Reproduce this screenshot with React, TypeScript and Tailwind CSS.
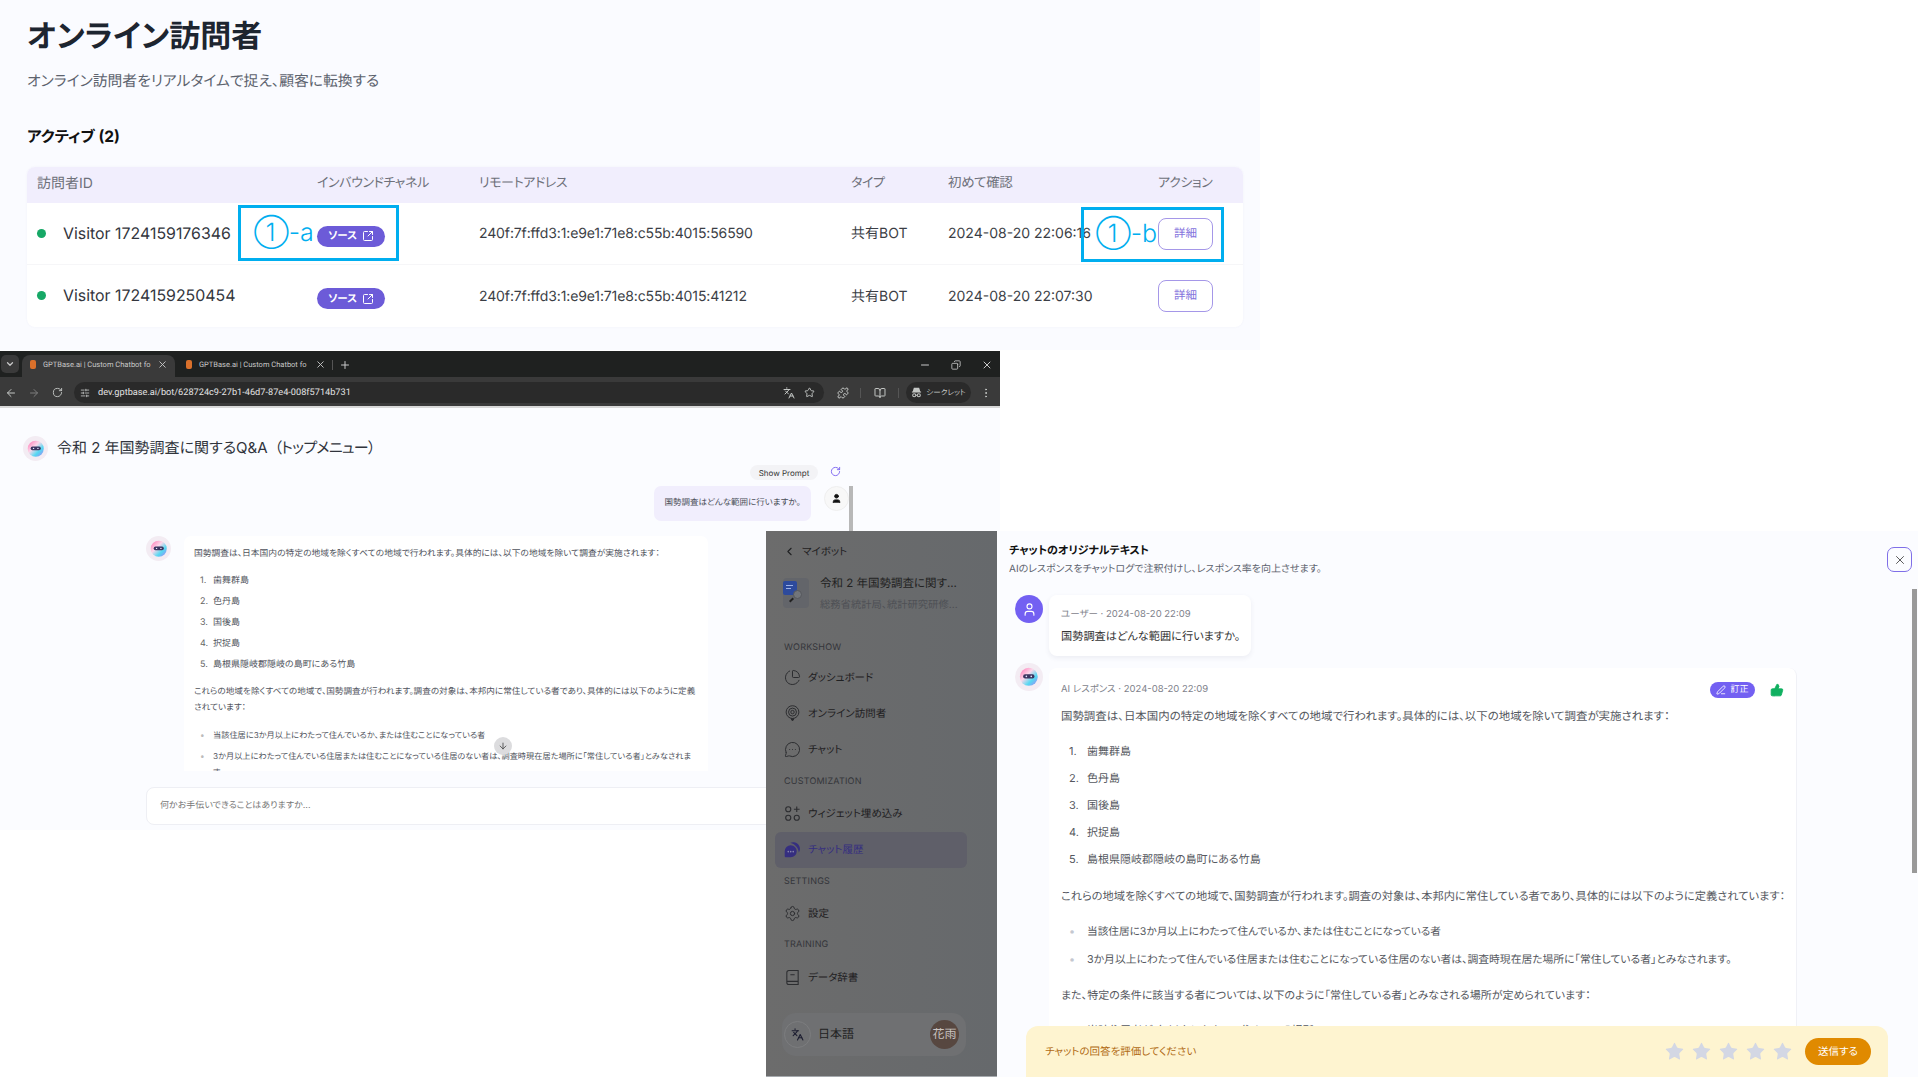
import React from 'react';
import {
  ArrowLeft,
  ArrowRight,
  BookOpen,
  ChartPie,
  ChevronDown,
  ChevronLeft,
  Copy,
  EllipsisVertical,
  Languages,
  MessageCircleMore,
  Minus,
  PenLine,
  Plus,
  Puzzle,
  RotateCw,
  Settings,
  SlidersHorizontal,
  SquareArrowOutUpRight,
  Star,
  ThumbsUp,
  User,
  X,
} from 'lucide-react';

const visitors = [
  { id: 'Visitor 1724159176346', addr: '240f:7f:ffd3:1:e9e1:71e8:c55b:4015:56590', seen: '2024-08-20 22:06:16' },
  { id: 'Visitor 1724159250454', addr: '240f:7f:ffd3:1:e9e1:71e8:c55b:4015:41212', seen: '2024-08-20 22:07:30' },
];

const islands = ['歯舞群島', '色丹島', '国後島', '択捉島', '島根県隠岐郡隠岐の島町にある竹島'];

const firstLine = '国勢調査は、日本国内の特定の地域を除くすべての地域で行われます。具体的には、以下の地域を除いて調査が実施されます：';
const bulletA = '当該住居に3か月以上にわたって住んでいるか、または住むことになっている者';

function BotAvatar({ className }: { className: string }) {
  return (
    <div className={`${className} shrink-0 rounded-full bg-[#f3ecf3] flex items-center justify-center`}>
      <svg viewBox="0 0 24 24" className="w-[70%] h-[70%]">
        <defs>
          <linearGradient id="botface" x1="0" y1="0" x2="1" y2="1">
            <stop offset="0" stopColor="#ff6fb0" />
            <stop offset="0.4" stopColor="#fcd7ea" />
            <stop offset="0.68" stopColor="#55d9f2" />
            <stop offset="1" stopColor="#a77bf5" />
          </linearGradient>
        </defs>
        <circle cx="12" cy="12" r="11" fill="url(#botface)" />
        <rect x="5" y="9" width="14" height="5" rx="2.5" fill="#3b3560" />
        <circle cx="9" cy="11.5" r="1" fill="#e8e6ff" />
        <circle cx="15" cy="11.5" r="1" fill="#e8e6ff" />
      </svg>
    </div>
  );
}

function TabFavicon() {
  return <div className="w-[6px] h-[9px] rounded-[2px] bg-[#d9702b] shrink-0" />;
}

function IncognitoIcon() {
  return (
    <svg viewBox="0 0 24 24" className="w-[11px] h-[11px]" fill="none" stroke="currentColor" strokeWidth="2.2">
      <path d="M7 3h10l2 7H5z" fill="currentColor" />
      <path d="M2 11h20" />
      <circle cx="7" cy="18" r="3.4" />
      <circle cx="17" cy="18" r="3.4" />
      <path d="M10.400 18h3.200" />
    </svg>
  );
}

function OnlineIcon() {
  return (
    <svg viewBox="0 0 24 24" className="w-[17px] h-[17px]" fill="none" stroke="#2c2d30" strokeWidth="1.4">
      <circle cx="12" cy="10" r="9" />
      <circle cx="12" cy="10" r="5.6" />
      <circle cx="12" cy="10" r="2.4" />
      <path d="M10 19.5h4l-2 3z" fill="#2c2d30" />
    </svg>
  );
}

function WidgetIcon() {
  return (
    <svg viewBox="0 0 24 24" className="w-[17px] h-[17px]" fill="none" stroke="#2c2d30" strokeWidth="1.6">
      <circle cx="6" cy="6" r="3.6" />
      <circle cx="6" cy="18" r="3.6" />
      <circle cx="18" cy="18" r="3.6" />
      <path d="M18 2v8M14 6h8" />
    </svg>
  );
}

function ChatHistoryIcon() {
  return (
    <svg viewBox="0 0 24 24" className="w-[17px] h-[17px]" fill="#352e80">
      <path d="M9 2.5a9.5 9.5 0 0 1 13.5 8.6c0 2-.6 3.6-1.6 5 -.2-5.6-4.6-11.4-11.9-13.6z" />
      <path d="M9.5 6a8.5 8.5 0 0 1 8.5 8.5A8.5 8.5 0 0 1 9.5 23H2.5A1.5 1.5 0 0 1 1 21.500V14.500A8.500 8.500 0 0 1 9.500 6z" />
      <circle cx="6" cy="15" r="1.1" fill="#8d8bb0" />
      <circle cx="9.500" cy="15" r="1.1" fill="#8d8bb0" />
      <circle cx="13" cy="15" r="1.1" fill="#8d8bb0" />
    </svg>
  );
}

function DictIcon() {
  return (
    <svg viewBox="0 0 24 24" className="w-[17px] h-[17px]" fill="none" stroke="#2c2d30" strokeWidth="1.5">
      <path d="M4 19V5a3 3 0 0 1 3-3h13v20H7a3 3 0 0 1-3-3zM4 17.500h16M9 8h6" />
    </svg>
  );
}

function BotDocIcon() {
  return (
    <div className="relative w-[26px] h-[30px] shrink-0 rounded-[4px] bg-[#63656a]">
      <div className="absolute left-0 top-[3px] w-[14px] h-[14px] rounded-[2px] bg-[#2d4a9c] flex flex-col gap-[2px] pt-[4px] pl-[3px]">
        <div className="w-[7px] h-px bg-[#9fb3e6]" />
        <div className="w-[5px] h-px bg-[#9fb3e6]" />
      </div>
      <div className="absolute left-[10px] top-[12px] w-[9px] h-[9px] rounded-full border border-[#55575c] bg-[#72757a]" />
      <div className="absolute left-[6px] top-[21px] w-[5px] h-[2px] rotate-[-45deg] bg-[#222]" />
    </div>
  );
}

function NavItem({ icon, label, active }: { icon: React.ReactNode; label: string; active?: boolean }) {
  return (
    <div
      className={`flex items-center h-[36px] pl-[9px] gap-[7px] rounded-[6px] text-[10.5px] ${
        active ? 'bg-[#5f5f69] text-[#352e80]' : 'text-[#1f2022]'
      }`}
    >
      <div className="w-[17px] flex justify-center">{icon}</div>
      <span>{label}</span>
    </div>
  );
}

function NavHeading({ children }: { children: React.ReactNode }) {
  return <div className="pl-[9px] h-[16px] leading-[16px] text-[9px] text-[#34353a] tracking-[0.2px]">{children}</div>;
}

function VisitorsPanel() {
  return (
    <section className="absolute left-0 top-0 w-[1260px] h-[350px] bg-[#fafbff] pl-[27px] pr-[17px]">
      <h1 className="pt-[16px] h-[62px] text-[31px] leading-[42px] font-bold text-[#1d2530]">オンライン訪問者</h1>
      <p className="mt-[7px] text-[14.8px] leading-[24px] text-[#5d636e]">オンライン訪問者をリアルタイムで捉え、顧客に転換する</p>
      <h2 className="mt-[32px] text-[15.5px] leading-[24px] font-bold text-[#111]">アクティブ&nbsp;(2)</h2>
      <div className="mt-[18px] rounded-[8px] bg-white overflow-hidden shadow-[0_0_2px_rgba(120,120,180,0.08)]">
        <div className="grid grid-cols-[280px_162px_372px_97px_210px_1fr] pl-[10px] h-[36px] pb-[3px] items-center bg-[#f1eefd] text-[13px] tracking-[-0.4px] text-[#6e717a]">
          <div className="text-[14px] tracking-normal">訪問者ID</div>
          <div>インバウンドチャネル</div>
          <div>リモートアドレス</div>
          <div>タイプ</div>
          <div className="text-[13.5px]">初めて確認</div>
          <div>アクション</div>
        </div>
        {visitors.map((v, i) => (
          <div
            key={v.id}
            className={`grid grid-cols-[280px_162px_372px_97px_210px_1fr] pl-[10px] h-[62px] items-center ${
              i === 0 ? 'border-b border-[#f6f6f8]' : ''
            }`}
          >
            <div className="flex items-center gap-[17px] text-[15.9px] text-[#33363d]">
              <span className="w-[9px] h-[9px] rounded-full bg-[#16a866]" />
              <span>{v.id}</span>
            </div>
            <div className="pt-[5px]">
              <div className="w-[68px] h-[21px] rounded-full bg-[#6c5bd8] flex items-center justify-center gap-[5px] text-white text-[10.5px] font-bold">
                <span>ソース</span>
                <SquareArrowOutUpRight size={12} strokeWidth={2} />
              </div>
            </div>
            <div className="text-[14px] text-[#3b3e45] tracking-[-0.12px]">{v.addr}</div>
            <div className="text-[14px] text-[#3b3e45]">共有BOT</div>
            <div className="text-[14px] text-[#3b3e45]">{v.seen}</div>
            <div>
              <div className="w-[55px] h-[32px] rounded-[8px] border border-[#a597e8] bg-white flex items-center justify-center text-[11.5px] text-[#8573dd]">
                詳細
              </div>
            </div>
          </div>
        ))}
      </div>
      <div className="absolute left-[238px] top-[205px] w-[161px] h-[56px] border-[3px] border-[#00aeef] flex items-center pl-[13px] text-[25px] font-light text-[#00aeef] leading-none">
        ①-a
      </div>
      <div className="absolute left-[1081px] top-[207px] w-[143px] h-[55px] border-[3px] border-[#00aeef] flex items-center pl-[12px] text-[25px] font-light text-[#00aeef] leading-none">
        ①-b
      </div>
    </section>
  );
}

function BrowserWindow() {
  return (
    <section className="absolute left-0 top-[351px] w-[1000px] h-[479px] bg-[#fbfcff] flex flex-col">
      <div className="h-[26px] bg-[#1f2120] flex items-end pl-[1px] text-[#c8c8c8] font-['Roboto',sans-serif] text-[7.5px]">
        <div className="w-[18px] h-[18px] mb-[4px] rounded-[5px] bg-[#3a3a3a] flex items-center justify-center">
          <ChevronDown size={10} strokeWidth={3} />
        </div>
        <div className="ml-[3px] w-[153px] h-[22px] rounded-t-[8px] bg-[#3a3a3a] flex items-center pl-[8px] pr-[7px] pb-[3px]">
          <TabFavicon />
          <span className="ml-[7px] w-[110px] whitespace-nowrap">GPTBase.ai | Custom Chatbot fo</span>
          <X size={11} className="ml-auto" />
        </div>
        <div className="w-[180px] h-[22px] flex items-center pl-[11px] pb-[3px]">
          <TabFavicon />
          <span className="ml-[7px] w-[110px] whitespace-nowrap">GPTBase.ai | Custom Chatbot fo</span>
          <X size={11} className="ml-[6px]" />
          <div className="ml-[6px] h-[10px] w-px bg-[#555]" />
          <Plus size={12} className="ml-[6px]" />
        </div>
        <div className="ml-auto h-[22px] flex items-center gap-[20px] pr-[7px] pb-[3px]">
          <Minus size={12} />
          <Copy size={10} className="rotate-90" />
          <X size={12} />
        </div>
      </div>
      <div className="h-[31px] pt-[2px] bg-[#3a3a3a] border-b-2 border-[#d8d8d8] flex items-center pl-[5px] pr-[8px] text-[#c4c7c5]">
        <ArrowLeft size={12} />
        <ArrowRight size={12} className="ml-[11px] text-[#7c7c7c]" />
        <RotateCw size={11} className="ml-[12px]" />
        <div className="ml-[11px] w-[751px] h-[21px] rounded-full bg-[#2a2a2a] flex items-center pl-[6px] pr-[9px]">
          <SlidersHorizontal size={10} />
          <span className="ml-[8px] font-['Roboto',sans-serif] text-[9.2px] text-[#e3e3e3]">dev.gptbase.ai/bot/628724c9-27b1-46d7-87e4-008f5714b731</span>
          <Languages size={12} className="ml-auto" />
          <Star size={11} className="ml-[9px]" />
        </div>
        <Puzzle size={12} className="ml-[13px]" />
        <div className="ml-[11px] h-[10px] w-px bg-[#555]" />
        <BookOpen size={12} className="ml-[13px]" />
        <div className="ml-[12px] h-[10px] w-px bg-[#555]" />
        <div className="ml-[7px] w-[65px] h-[21px] rounded-full bg-[#2a2a2a] flex items-center justify-center gap-[4px] text-[7.5px]">
          <IncognitoIcon />
          <span>シークレット</span>
        </div>
        <EllipsisVertical size={12} className="ml-[9px]" />
      </div>
      <div className="relative flex-1 pl-[23px]">
        <div className="pt-[28px] flex items-center gap-[9px] text-[15px] text-[#30343c]">
          <BotAvatar className="w-[25px] h-[25px]" />
          <span>令和 2 年国勢調査に関するQ&amp;A</span>
          <span className="-ml-[2px] tracking-[-0.7px]">（トップメニュー）</span>
        </div>
        <div className="absolute left-[750px] top-[57px] w-[68px] h-[15px] rounded-full bg-[#f3f3f6] flex items-center justify-center text-[8px] text-[#333]">
          Show Prompt
        </div>
        <RotateCw size={11} className="absolute left-[830px] top-[58px] text-[#7a63f0]" />
        <div className="absolute left-[654px] top-[78px] w-[157px] h-[35px] rounded-[7px] bg-[#f1eefd] flex items-center justify-center text-[8.5px] text-[#4b4e58]">
          国勢調査はどんな範囲に行いますか。
        </div>
        <div className="absolute left-[824px] top-[78px] w-[25px] h-[25px] rounded-full bg-[#f8f8f8] border border-[#efefef] flex items-center justify-center">
          <User size={11} fill="#111" className="text-[#111]" />
        </div>
        <div className="absolute left-[849px] top-[78px] w-[4px] h-[45px] bg-[#b8b8b8]" />
        <div className="absolute left-[146px] top-[128px] flex gap-[13px]">
          <BotAvatar className="w-[25px] h-[25px]" />
          <div className="w-[524px] h-[235px] overflow-hidden rounded-t-[7px] bg-white pl-[10px] pr-[4px] pt-[10px] text-[9px] leading-[16px] text-[#4f535c]">
            <p className="whitespace-nowrap text-[8.75px]">{firstLine}</p>
            <ol className="mt-[9px] pl-[6px]">
              {islands.map((name, i) => (
                <li key={name} className="flex h-[20.800px] items-center">
                  <span className="w-[13px] text-[#666]">{i + 1}.</span>
                  <span>{name}</span>
                </li>
              ))}
            </ol>
            <p className="mt-[9px] whitespace-nowrap text-[8.6px]">
              これらの地域を除くすべての地域で、国勢調査が行われます。調査の対象は、本邦内に常住している者であり、具体的には以下のように定義
              <br />
              されています：
            </p>
            <ul className="mt-[9px] pl-[6px] text-[8.2px]">
              <li className="flex h-[21px] items-center">
                <span className="w-[13px] text-[#bbb]">•</span>
                <span>{bulletA}</span>
              </li>
              <li className="flex items-start pt-[2px]">
                <span className="w-[13px] shrink-0 text-[#bbb]">•</span>
                <span className="whitespace-nowrap">
                  3か月以上にわたって住んでいる住居または住むことになっている住居のない者は、調査時現在居た場所に「常住している者」とみなされま
                  <br />
                  す。
                </span>
              </li>
            </ul>
          </div>
        </div>
        <div className="absolute left-[494px] top-[329px] w-[18px] h-[18px] rounded-full bg-[#dcdcde] flex items-center justify-center">
          <ArrowLeft size={10} className="-rotate-90 text-[#444]" />
        </div>
        <div className="absolute left-[146px] top-[379px] w-[640px] h-[38px] rounded-[8px] bg-white border border-[#eeeff4] flex items-center pl-[13px] text-[9px] text-[#777]">
          何かお手伝いできることはありますか...
        </div>
      </div>
    </section>
  );
}

function Sidebar() {
  return (
    <aside className="absolute left-[766px] top-[531px] w-[231px] h-[546px] bg-gradient-to-r from-[#6c6c6c] to-[#66696c] border-b border-[#a6aaae] flex flex-col pl-[9px] pr-[30px]">
      <div className="pt-[13px] pl-[8px] flex items-center gap-[6px] text-[10.5px] text-[#1f2022]">
        <ChevronLeft size={13} />
        <span>マイボット</span>
      </div>
      <div className="mt-[13px] pl-[8px] flex items-center gap-[11px]">
        <BotDocIcon />
        <div className="min-w-0">
          <div className="text-[11.5px] leading-[20px] text-[#222] whitespace-nowrap">令和 2 年国勢調査に関す...</div>
          <div className="mt-[3px] text-[10.3px] leading-[18px] text-[#4e5055] whitespace-nowrap">総務省統計局、統計研究研修...</div>
        </div>
      </div>
      <div className="mt-[26px]">
        <NavHeading>WORKSHOW</NavHeading>
      </div>
      <div className="mt-[4px]">
        <NavItem icon={<ChartPie size={17} strokeWidth={1.4} color="#2c2d30" />} label="ダッシュボード" />
        <NavItem icon={<OnlineIcon />} label="オンライン訪問者" />
        <NavItem icon={<MessageCircleMore size={17} strokeWidth={1.4} color="#2c2d30" />} label="チャット" />
      </div>
      <div className="mt-[6px]">
        <NavHeading>CUSTOMIZATION</NavHeading>
      </div>
      <div className="mt-[6px]">
        <NavItem icon={<WidgetIcon />} label="ウィジェット埋め込み" />
        <NavItem icon={<ChatHistoryIcon />} label="チャット履歴" active />
      </div>
      <div className="mt-[6px]">
        <NavHeading>SETTINGS</NavHeading>
      </div>
      <div className="mt-[6px]">
        <NavItem icon={<Settings size={17} strokeWidth={1.4} color="#2c2d30" />} label="設定" />
      </div>
      <div className="mt-[5px]">
        <NavHeading>TRAINING</NavHeading>
      </div>
      <div className="mt-[7px]">
        <NavItem icon={<DictIcon />} label="データ辞書" />
      </div>
      <div className="mt-[17px] ml-[7px] mr-[1px] h-[43px] rounded-[14px] bg-[#6f7072] pl-[2px] pr-[7px] flex items-center">
        <div className="w-[27px] h-[27px] rounded-full border border-[#7c7d7f] flex items-center justify-center">
          <Languages size={13} color="#1c1d30" />
        </div>
        <span className="ml-[7px] text-[12px] text-[#222]">日本語</span>
        <div className="ml-auto w-[29px] h-[29px] rounded-full bg-[#574740] flex items-center justify-center text-[12px] text-[#c9c4c1]">
          花雨
        </div>
      </div>
    </aside>
  );
}

function TranscriptPanel() {
  return (
    <section className="absolute left-[997px] top-[531px] w-[921px] h-[546px] bg-[#fbfcff] overflow-hidden">
      <div className="pl-[12px] pt-[11px]">
        <div className="text-[11px] leading-[16px] font-bold text-[#111]">チャットのオリジナルテキスト</div>
        <div className="mt-[3px] text-[10px] leading-[16px] text-[#5d636e]">AIのレスポンスをチャットログで注釈付けし、レスポンス率を向上させます。</div>
      </div>
      <div className="absolute right-[6px] top-[16px] w-[25px] h-[25px] rounded-[7px] border border-[#7f6fe8] flex items-center justify-center text-[#444]">
        <X size={14} strokeWidth={1.5} />
      </div>
      <div className="absolute right-[1px] top-[58px] w-[5px] h-[284px] bg-[#999]" />
      <div className="pl-[18px] mt-[18px] flex gap-[6px]">
        <div className="w-[28px] h-[28px] rounded-full bg-[#7360f2] flex items-center justify-center text-white">
          <User size={15} strokeWidth={1.8} />
        </div>
        <div className="w-[202px] h-[61px] rounded-[8px] bg-white shadow-[0_2px_5px_rgba(60,60,100,0.08)] pl-[12px] pt-[12px]">
          <div className="text-[9.500px] leading-[16px] text-[#7f838c]">ユーザー · 2024-08-20 22:09</div>
          <div className="mt-[3px] text-[11.200px] leading-[20px] text-[#333]">国勢調査はどんな範囲に行いますか。</div>
        </div>
      </div>
      <div className="pl-[18px] mt-[7px] flex gap-[6px]">
        <BotAvatar className="w-[28px] h-[28px]" />
        <div className="relative mt-[5px] w-[748px] h-[500px] rounded-t-[8px] bg-white border-r border-[#f0f1f6] pl-[12px] pt-[14px] text-[11px] text-[#555860]">
          <div className="text-[9.500px] leading-[16px] text-[#7f838c]">AI レスポンス · 2024-08-20 22:09</div>
          <div className="absolute left-[661px] top-[14px] w-[45px] h-[16px] rounded-full bg-[#7360f2] flex items-center justify-center gap-[4px] text-white text-[9px]">
            <PenLine size={10} />
            <span>訂正</span>
          </div>
          <ThumbsUp size={14} fill="#10b060" strokeWidth={1.5} className="absolute left-[721px] top-[15px] text-[#10b060]" />
          <p className="mt-[8px] text-[11.450px] leading-[20px]">{firstLine}</p>
          <ol className="mt-[12px] pl-[8px]">
            {islands.map((name, i) => (
              <li key={name} className="flex h-[27px] items-center">
                <span className="w-[13px]">{i + 1}.</span>
                <span className="ml-[5px]">{name}</span>
              </li>
            ))}
          </ol>
          <p className="mt-[13px] text-[11.250px] leading-[20px]">これらの地域を除くすべての地域で、国勢調査が行われます。調査の対象は、本邦内に常住している者であり、具体的には以下のように定義されています：</p>
          <ul className="mt-[12px] pl-[8px] text-[10.800px]">
            <li className="flex h-[28px] items-center">
              <span className="w-[18px] text-[#c5c8d0]">•</span>
              <span className="text-[10.650px]">{bulletA}</span>
            </li>
            <li className="flex h-[28px] items-center">
              <span className="w-[18px] text-[#c5c8d0]">•</span>
              <span>3か月以上にわたって住んでいる住居または住むことになっている住居のない者は、調査時現在居た場所に「常住している者」とみなされます。</span>
            </li>
          </ul>
          <p className="mt-[11px] leading-[20px]">また、特定の条件に該当する者については、以下のように「常住している者」とみなされる場所が定められています：</p>
          <div className="mt-[15px] pl-[26px] leading-[20px]">当該住居者が1年以上にわたって住んでいる場所</div>
        </div>
      </div>
      <div className="absolute left-[29px] bottom-0 w-[862px] h-[51px] rounded-t-[12px] bg-[#fef4d0] flex items-center pl-[19px] pr-[17px]">
        <span className="text-[10.500px] text-[#b06a12]">チャットの回答を評価してください</span>
        <div className="ml-auto flex gap-[6px]">
          {[0, 1, 2, 3, 4].map((n) => (
            <Star key={n} size={21} fill="#d3d7e4" strokeWidth={0} />
          ))}
        </div>
        <div className="ml-[12px] w-[66px] h-[27px] rounded-full bg-[#e08a00] flex items-center justify-center text-white text-[10.500px]">
          送信する
        </div>
      </div>
    </section>
  );
}

export default function App() {
  return (
    <div className="relative w-[1918px] h-[1077px] overflow-hidden bg-white font-['Inter','Noto_Sans_CJK_JP',sans-serif] [font-feature-settings:'palt'] [text-rendering:geometricPrecision]">
      <VisitorsPanel />
      <BrowserWindow />
      <TranscriptPanel />
      <Sidebar />
    </div>
  );
}
